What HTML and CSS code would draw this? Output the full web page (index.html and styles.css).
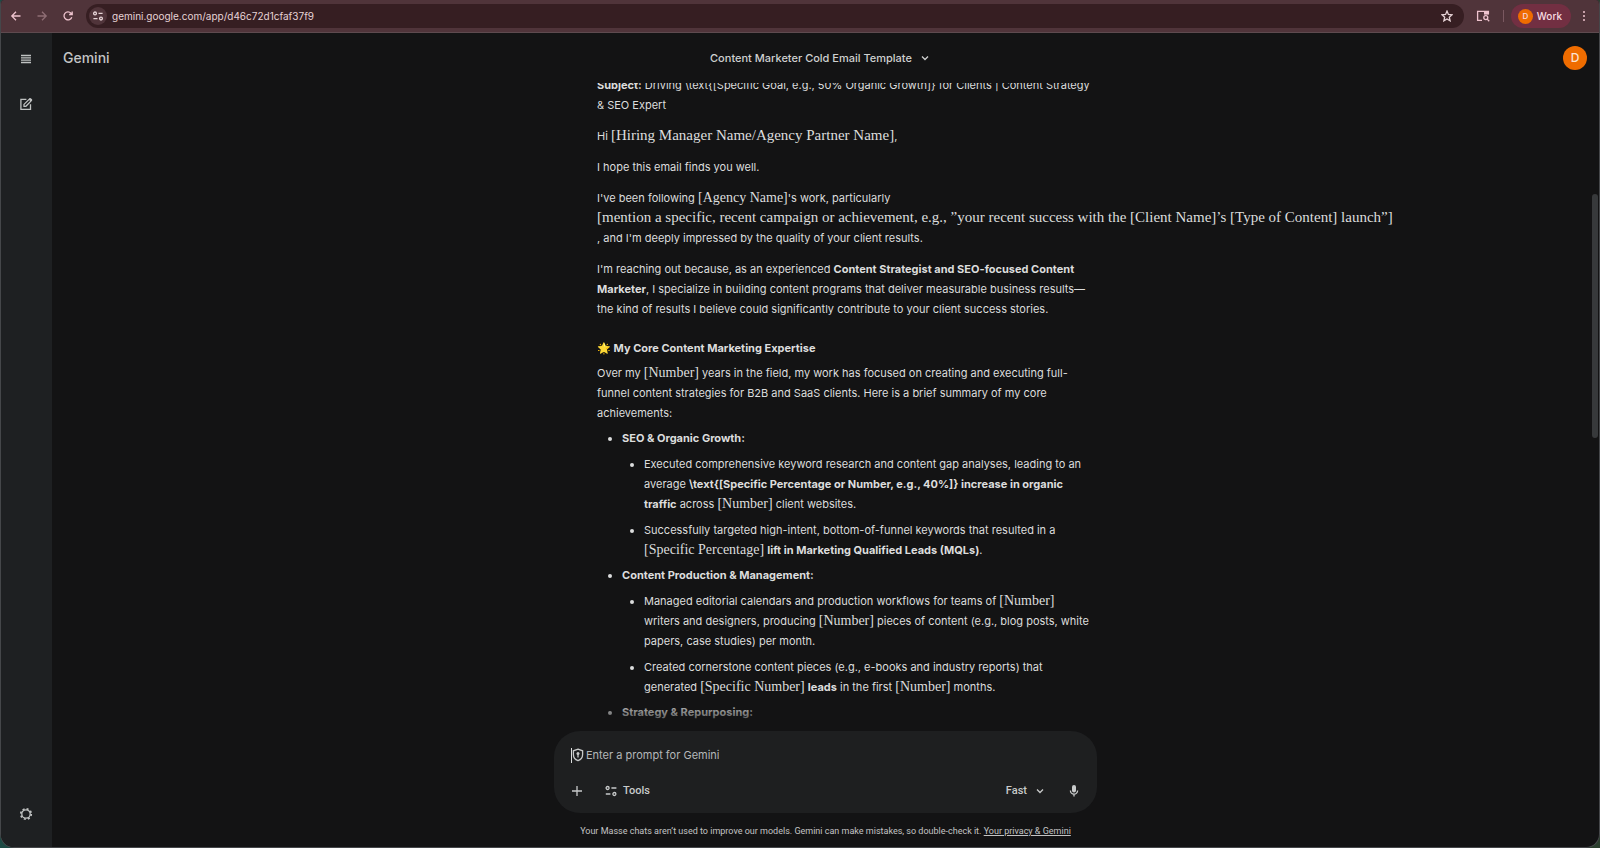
FILE: index.html
```html
<!DOCTYPE html>
<html lang="en">
<head>
    <meta charset="UTF-8">
    <meta name="viewport" content="width=device-width, initial-scale=1.0">
    <title>Gemini</title>
    <link rel="stylesheet" href="styles.css">
</head>
<body>
    <div class="window">
        <!-- Browser toolbar -->
        <div class="toolbar">
            <div class="nav-buttons">
                <button class="icon-btn" aria-label="Back">
                    <svg width="12" height="12" viewBox="0 0 12 12"><path d="M10.5 6H2M6 1.8L1.8 6L6 10.2"/></svg>
                </button>
                <button class="icon-btn dim" aria-label="Forward">
                    <svg width="12" height="12" viewBox="0 0 12 12"><path d="M1.5 6H10M6 1.8L10.2 6L6 10.2"/></svg>
                </button>
                <button class="icon-btn" aria-label="Reload">
                    <svg width="12" height="12" viewBox="0 0 12 12"><path d="M9.8 7.2A4 4 0 1 1 9 3.2L10 4.3M10.2 1.4V4.5H7.1"/></svg>
                </button>
            </div>
            <div class="omnibox">
                <button class="site-info" aria-label="View site information">
                    <svg width="12" height="12" viewBox="0 0 12 12"><circle cx="3" cy="3.4" r="1.4"/><path d="M6.5 3.4H10.6M1.4 8.6H5.5"/><circle cx="9" cy="8.6" r="1.4"/></svg>
                </button>
                <input class="url" type="text" aria-label="Address" value="gemini.google.com/app/d46c72d1cfaf37f9">
                <button class="icon-btn" aria-label="Bookmark this tab">
                    <svg width="12" height="12" viewBox="0 0 12 12"><path d="M6 1.1L7.4 4.5L11 4.8L8.3 7.2L9.1 10.8L6 8.9L2.9 10.8L3.7 7.2L1 4.8L4.6 4.5Z"/></svg>
                </button>
            </div>
            <button class="icon-btn" aria-label="Search side panel">
                <svg width="14" height="12" viewBox="0 0 14 12"><path d="M6 10.4H1.6V1.4H12.4V4"/><path class="solid" d="M8 1.4H13V4.6H8Z"/><circle cx="9.8" cy="7.6" r="2"/><path d="M11.2 9.1L13.2 11.2"/></svg>
            </button>
            <span class="divider"></span>
            <button class="profile"><span class="profile-dot">D</span>Work</button>
            <button class="icon-btn" aria-label="Menu">
                <svg width="12" height="12" viewBox="0 0 12 12"><g class="solid"><circle cx="6" cy="2" r="1"/><circle cx="6" cy="6" r="1"/><circle cx="6" cy="10" r="1"/></g></svg>
            </button>
        </div>

        <div class="app">
            <nav class="sidebar">
                <button class="icon-btn" aria-label="Main menu">
                    <svg width="12" height="12" viewBox="0 0 12 12"><path d="M1 2.5H11M1 4.8H11M1 7.2H11M1 9.5H11"/></svg>
                </button>
                <button class="icon-btn" aria-label="New chat">
                    <svg width="14" height="14" viewBox="0 0 14 14"><path d="M7.4 2.4H1.9V12.4H11.5V7.2"/><path d="M5 9.4V7.4L10.6 1.8L12.4 3.6L6.9 9.3Z"/><path class="solid" d="M9.8 2.6L11.5 0.9L13.3 2.6L11.6 4.4Z"/></svg>
                </button>
                <button class="icon-btn settings" aria-label="Settings">
                    <svg width="14" height="14" viewBox="0 0 14 14"><circle cx="7" cy="7" r="4.2"/><circle class="cogs" cx="7" cy="7" r="5.2"/></svg>
                </button>
            </nav>

            <main class="main">
                <header class="topbar">
                    <span class="brand">Gemini</span>
                    <button class="title-btn">
                        Content Marketer Cold Email Template
                        <svg width="10" height="10" viewBox="0 0 10 10"><path d="M2 3.5L5 6.5L8 3.5"/></svg>
                    </button>
                    <button class="avatar" aria-label="Account">D</button>
                </header>

                <section class="chat">
                    <article class="response">
                        <p><b>Subject:</b> Driving \text{[Specific Goal, e.g., 50% Organic Growth]} for Clients | Content Strategy &amp; SEO Expert</p>
                        <p>Hi <span class="math wide">[Hiring Manager Name/Agency Partner Name]</span>,</p>
                        <p>I hope this email finds you well.</p>
                        <p>I've been following <span class="math">[Agency Name]</span>'s work, particularly <span class="math wide">[mention a specific, recent campaign or achievement, e.g., ”your recent success with the [Client Name]’s [Type of Content] launch”]</span><br>, and I'm deeply impressed by the quality of your client results.</p>
                        <p>I'm reaching out because, as an experienced <b>Content Strategist and SEO-focused Content Marketer</b>, I specialize in building content programs that deliver measurable business results—the kind of results I believe could significantly contribute to your client success stories.</p>
                        <h3>🌟 My Core Content Marketing Expertise</h3>
                        <p>Over my <span class="math">[Number]</span> years in the field, my work has focused on creating and executing full-funnel content strategies for B2B and SaaS clients. Here is a brief summary of my core achievements:</p>
                        <ul>
                            <li><b>SEO &amp; Organic Growth:</b>
                                <ul>
                                    <li>Executed comprehensive keyword research and content gap analyses, leading to an average <b>\text{[Specific Percentage or Number, e.g., 40%]} increase in organic traffic</b> across <span class="math">[Number]</span> client websites.</li>
                                    <li>Successfully targeted high-intent, bottom-of-funnel keywords that resulted in a <span class="math">[Specific Percentage]</span> <b>lift in Marketing Qualified Leads (MQLs)</b>.</li>
                                </ul>
                            </li>
                            <li><b>Content Production &amp; Management:</b>
                                <ul>
                                    <li>Managed editorial calendars and production workflows for teams of <span class="math">[Number]</span> writers and designers, producing <span class="math">[Number]</span> pieces of content (e.g., blog posts, white papers, case studies) per month.</li>
                                    <li>Created cornerstone content pieces (e.g., e-books and industry reports) that generated <span class="math">[Specific Number]</span> <b>leads</b> in the first <span class="math">[Number]</span> months.</li>
                                </ul>
                            </li>
                            <li><b>Strategy &amp; Repurposing:</b></li>
                        </ul>
                    </article>
                </section>

                <footer class="bottom">
                    <form class="composer">
                        <div class="prompt-row">
                            <span class="caret"></span>
                            <svg width="12" height="14" viewBox="0 0 12 14"><path d="M6 1.2L10.6 2.8V6.6C10.6 9.5 8.7 11.8 6 12.7C3.3 11.8 1.4 9.5 1.4 6.6V2.8Z"/><circle class="solid" cx="6" cy="5.6" r="1.5"/><path d="M6 5.8V9.4"/></svg>
                            <input class="prompt" type="text" aria-label="Prompt" placeholder="Enter a prompt for Gemini">
                        </div>
                        <div class="action-row">
                            <button type="button" class="icon-btn" aria-label="Add files">
                                <svg width="12" height="12" viewBox="0 0 12 12"><path d="M6 1V11M1 6H11"/></svg>
                            </button>
                            <button type="button" class="text-btn tools">
                                <svg width="12" height="12" viewBox="0 0 12 12"><circle cx="2.6" cy="3" r="1.5"/><path d="M6.4 3H11.4M.8 9H5.4"/><circle cx="9.4" cy="9" r="1.5"/></svg>
                                Tools
                            </button>
                            <button type="button" class="text-btn mode">
                                Fast
                                <svg width="10" height="10" viewBox="0 0 10 10"><path d="M2 3.5L5 6.5L8 3.5"/></svg>
                            </button>
                            <button type="button" class="icon-btn" aria-label="Use microphone">
                                <svg width="12" height="14" viewBox="0 0 12 14"><rect class="solid" x="4" y="1" width="4" height="7.4" rx="2"/><path d="M2.4 6.6A3.6 3.6 0 0 0 9.6 6.6M6 10.2V12.6"/></svg>
                            </button>
                        </div>
                    </form>
                    <p class="disclaimer">Your Masse chats aren’t used to improve our models. Gemini can make mistakes, so double-check it. <a href="#">Your privacy &amp; Gemini</a></p>
                </footer>
                <div class="scroll-thumb"></div>
            </main>
        </div>
    </div>
</body>
</html>
```
FILE: styles.css
```css
:root {
    --bg: #131314;
    --surface: #1e1f20;
    --text: #dcdddd;
    --muted: #c0c2c2;
    --orange: #ef6c00;
    --column: 543px;
}

* {
    box-sizing: border-box;
    margin: 0;
    padding: 0;
}

body {
    height: 100vh;
    overflow: hidden;
    font-family: Inter, "Liberation Sans", sans-serif;
    font-size: 11px;
    line-height: 20px;
    color: var(--text);
    background: linear-gradient(to right, #1c4a44, #2b3f2e);
}

button,
input {
    border: none;
    outline: none;
    background: none;
    color: inherit;
    font: inherit;
}

button {
    cursor: pointer;
}

svg {
    display: block;
    flex: none;
    fill: none;
    stroke: currentColor;
    stroke-width: 1.3;
}

.solid {
    fill: currentColor;
    stroke: none;
}

.window {
    height: 100vh;
    display: flex;
    flex-direction: column;
    overflow: hidden;
    background: var(--bg);
    border: 1px solid #45474a;
    border-top: none;
    border-radius: 4px 4px 14px 14px;
}

.icon-btn {
    display: flex;
    flex: none;
    align-items: center;
    justify-content: center;
    width: 24px;
    height: 24px;
}

/* Browser toolbar */
.toolbar {
    flex: none;
    display: flex;
    align-items: center;
    gap: 1px;
    height: 33px;
    padding: 0 3px;
    background: #50343a;
    border-bottom: 1px solid #5e4a4f;
    color: #eec3ce;
}

.nav-buttons {
    display: flex;
    gap: 2px;
}

.toolbar .dim {
    color: #8e6d74;
}

.omnibox {
    flex: 1;
    display: flex;
    align-items: center;
    height: 24px;
    margin: 0 6px 0 5px;
    padding: 0 5px 0 3px;
    border-radius: 12px;
    background: #361e22;
    color: #e6d3d6;
}

.site-info {
    display: flex;
    align-items: center;
    justify-content: center;
    width: 18px;
    height: 18px;
    border-radius: 50%;
    background: #50343a;
}

.url {
    flex: 1;
    margin-left: 5px;
    font-size: 10px;
}

.divider {
    width: 1px;
    height: 12px;
    margin: 0 6px 0 7px;
    background: #7a5860;
}

.profile {
    display: flex;
    align-items: center;
    gap: 4px;
    height: 24px;
    padding: 0 9px 0 7px;
    border-radius: 12px;
    background: #722f42;
    color: #f7dbe1;
    font-size: 10px;
    font-weight: 500;
}

.profile-dot {
    width: 15px;
    height: 15px;
    border-radius: 50%;
    background: var(--orange);
    font-size: 8px;
    line-height: 15px;
    text-align: center;
}

/* App shell */
.app {
    flex: 1;
    min-height: 0;
    display: flex;
}

.sidebar {
    flex: none;
    display: flex;
    flex-direction: column;
    align-items: center;
    gap: 21px;
    width: 51px;
    padding: 14px 2px 21px 0;
    background: #1e2022;
    color: var(--muted);
}

.settings {
    margin-top: auto;
}

.cogs {
    stroke-width: 1.8;
    stroke-dasharray: 2 2.08;
}

.main {
    position: relative;
    flex: 1;
    min-width: 0;
    display: flex;
    flex-direction: column;
}

.topbar {
    flex: none;
    display: grid;
    grid-template-columns: 1fr auto 1fr;
    align-items: center;
    height: 50px;
    padding: 0 12px 0 11px;
}

.brand {
    font-size: 14px;
    font-weight: 500;
    color: #c4c5c5;
}

.title-btn {
    display: flex;
    align-items: center;
    gap: 8px;
    padding-right: 10px;
    color: #cfd0d0;
    font-weight: 500;
}

.avatar {
    justify-self: end;
    width: 24px;
    height: 24px;
    border-radius: 50%;
    background: var(--orange);
    color: #fbe3d0;
    font-size: 12px;
    font-weight: 500;
}

/* Conversation, pinned to its newest line */
.chat {
    position: relative;
    flex: 1;
    min-height: 0;
    display: flex;
    flex-direction: column;
    justify-content: flex-end;
    align-items: center;
    padding-bottom: 9px;
    overflow: hidden;
}

.chat::after {
    content: "";
    position: absolute;
    right: 0;
    bottom: 0;
    left: 0;
    height: 32px;
    background: linear-gradient(to top, var(--bg), transparent);
}

.response {
    width: 100%;
    max-width: var(--column);
    padding: 0 5px 0 43px;
}

.response p {
    margin-bottom: 11px;
}

.response h3 {
    margin: 19px 0 5px;
    font-size: 11px;
    font-weight: 700;
}

.response h3 + p {
    margin-bottom: 5px;
}

.response ul {
    padding-left: 25px;
    list-style: disc;
}

.response ul ul {
    padding-left: 22px;
}

.response li + li {
    margin-top: 5px;
}

.response li li {
    margin-top: 6px;
}

.math {
    font-family: "Liberation Serif", serif;
    font-size: 14px;
    line-height: 14px;
    white-space: nowrap;
}

.math.wide {
    font-size: 15px;
}

/* Composer */
.bottom {
    flex: none;
    display: flex;
    flex-direction: column;
    align-items: center;
    padding-bottom: 6px;
}

.composer {
    width: 100%;
    max-width: var(--column);
    padding: 12px 11px 10px 17px;
    border-radius: 26px;
    background: var(--surface);
    color: #c8caca;
}

.prompt-row {
    display: flex;
    align-items: center;
    height: 24px;
}

.caret {
    width: 1px;
    height: 15px;
    background: var(--text);
}

.prompt {
    flex: 1;
    margin-left: 2px;
}

.prompt::placeholder {
    color: #b4b7b9;
    opacity: 1;
}

.action-row {
    display: flex;
    align-items: center;
    height: 24px;
    margin: 12px 0 0 -6px;
}

.text-btn {
    display: flex;
    align-items: center;
    gap: 6px;
    font-family: Roboto, "Liberation Sans", sans-serif;
    font-weight: 500;
}

.tools {
    margin-left: 16px;
}

.mode {
    gap: 8px;
    margin: 0 17px 0 auto;
}

.disclaimer {
    margin-top: 8px;
    font-family: Roboto, "Liberation Sans", sans-serif;
    font-size: 9px;
    color: #c3c4c4;
}

.disclaimer a {
    color: inherit;
}

.scroll-thumb {
    position: absolute;
    top: 161px;
    right: 1px;
    width: 6px;
    height: 244px;
    border-radius: 3px;
    background: #37393b;
}
```
